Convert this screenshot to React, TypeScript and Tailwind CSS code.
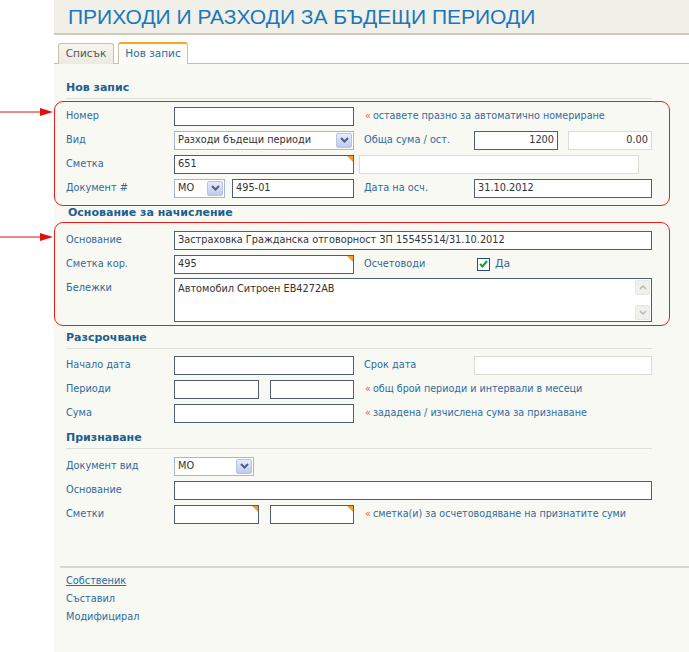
import React from "react";

const labelCls = "w-[108px] shrink-0 text-[#2f6a9b]";
const label2Cls = "w-[110px] shrink-0 text-[#2f6a9b]";

function Corner() {
  return (
    <span className="absolute right-0 top-0 h-0 w-0 border-l-[6px] border-t-[6px] border-l-transparent border-t-[#f0a030]" />
  );
}

function Field({
  w,
  value = "",
  right = false,
  disabled = false,
  corner = false,
}: {
  w: string;
  value?: string;
  right?: boolean;
  disabled?: boolean;
  corner?: boolean;
}) {
  return (
    <div
      className={`relative flex h-[19px] shrink-0 items-center bg-white px-[3px] text-[#333] ${w} ${
        disabled ? "border border-[#dcdcd3]" : "border border-[#4f5d72]"
      } ${right ? "justify-end" : ""}`}
    >
      <span className="leading-none">{value}</span>
      {corner && <Corner />}
    </div>
  );
}

function Select({ w, value }: { w: string; value: string }) {
  return (
    <div
      className={`flex h-[19px] shrink-0 items-center justify-between border border-[#a9b7cb] bg-white pl-[3px] pr-[1px] text-[#333] ${w}`}
    >
      <span className="leading-none">{value}</span>
      <span className="flex h-[15px] w-[16px] items-center justify-center rounded-[2px] border border-[#b6c4e2] bg-gradient-to-b from-[#e6ecf8] to-[#bccbeb]">
        <svg width="9" height="6" viewBox="0 0 9 6">
          <path d="M1 1 L4.5 4.5 L8 1" stroke="#4b5f88" strokeWidth="2" fill="none" />
        </svg>
      </span>
    </div>
  );
}

function Hint({ text }: { text: string }) {
  return (
    <span className="ml-[11px] text-[9.6px] text-[#2f6a9b]">
      <span className="mr-[2px] text-[#e45a5a]">«</span>
      {text}
    </span>
  );
}

function Row({ children }: { children: React.ReactNode }) {
  return <div className="flex h-[24px] items-center">{children}</div>;
}

function Heading({ text, className = "" }: { text: string; className?: string }) {
  return (
    <div className={`border-b border-[#deded6] pb-[3px] ${className}`}>
      <div className="h-[14px] text-[11px] font-bold leading-[14px] text-[#1d5f90]">{text}</div>
    </div>
  );
}

function Arrow({ top }: { top: string }) {
  return (
    <svg className={`absolute left-0 ${top}`} width="54" height="10" viewBox="0 0 54 10">
      <line x1="0" y1="5" x2="42" y2="5" stroke="#e01010" strokeWidth="1" />
      <polygon points="40,1 53,5 40,9" fill="#e01010" />
    </svg>
  );
}

export default function App() {
  return (
    <div className="relative h-[652px] w-[689px] overflow-hidden bg-white font-['DejaVu_Sans',sans-serif] text-[9.75px]">
      <Arrow top="top-[107px]" />
      <Arrow top="top-[232px]" />

      <div className="ml-[54px] flex h-[652px] flex-col">
        {/* header */}
        <div className="h-[35px] shrink-0 border-b-2 border-[#cfcbbb] bg-[#f1f0e8] pl-[14px] pt-[5px]">
          <div className="font-['Liberation_Sans',sans-serif] text-[21px] leading-[24px] text-[#1b77bd]">
            ПРИХОДИ И РАЗХОДИ ЗА БЪДЕЩИ ПЕРИОДИ
          </div>
        </div>

        {/* tabs */}
        <div className="flex h-[29px] shrink-0 items-end border-b border-[#c9c2a2] bg-white pl-[4px] text-[10.5px]">
          <div className="mb-[-1px] flex h-[21px] w-[56px] items-center justify-center rounded-t-[3px] border border-b-0 border-[#c9c2a2] bg-gradient-to-b from-[#f6f5ee] to-[#ecebe2] text-[#555]">
            Списък
          </div>
          <div className="mb-[-1px] ml-[4px] flex h-[22px] w-[70px] items-center justify-center rounded-t-[3px] border border-b-0 border-[#c9c2a2] border-t-2 border-t-[#f3a826] bg-[#fbfbf8] text-[#2f6a9b]">
            Нов запис
          </div>
        </div>

        {/* form */}
        <div className="flex-1 bg-[#f9f9f4]">
          <div className="ml-[12px] w-[586px]">
            <Heading text="Нов запис" className="mt-[17px]" />

            <div className="ml-[-12px] mt-[2px] w-[616px] rounded-[9px] border border-[#ee1c1c] pb-[5px] pl-[11px] pr-[17px] pt-[2px]">
              <Row>
                <span className={labelCls}>Номер</span>
                <Field w="w-[180px]" />
                <Hint text="оставете празно за автоматично номериране" />
              </Row>
              <Row>
                <span className={labelCls}>Вид</span>
                <Select w="w-[180px]" value="Разходи бъдещи периоди" />
                <span className={`ml-[10px] ${label2Cls}`}>Обща сума / ост.</span>
                <Field w="w-[84px]" value="1200" right />
                <div className="ml-[10px]">
                  <Field w="w-[84px]" value="0.00" right disabled />
                </div>
              </Row>
              <Row>
                <span className={labelCls}>Сметка</span>
                <Field w="w-[180px]" value="651" corner />
                <div className="ml-[5px]">
                  <Field w="w-[280px]" disabled />
                </div>
              </Row>
              <Row>
                <span className={labelCls}>Документ #</span>
                <Select w="w-[51px]" value="МО" />
                <div className="ml-[7px]">
                  <Field w="w-[122px]" value="495-01" />
                </div>
                <span className={`ml-[10px] ${label2Cls}`}>Дата на осч.</span>
                <Field w="w-[178px]" value="31.10.2012" />
              </Row>
            </div>

            <div className="ml-[2px] h-[14px] text-[11px] font-bold leading-[14px] text-[#1d5f90]">
              Основание за начисление
            </div>

            <div className="ml-[-12px] mt-[2px] w-[616px] rounded-[9px] border border-[#ee1c1c] pb-[3px] pl-[11px] pr-[17px] pt-[5px]">
              <Row>
                <span className={labelCls}>Основание</span>
                <Field w="w-[478px]" value="Застраховка Гражданска отговорност ЗП 15545514/31.10.2012" />
              </Row>
              <Row>
                <span className={labelCls}>Сметка кор.</span>
                <Field w="w-[180px]" value="495" corner />
                <span className={`ml-[10px] ${label2Cls}`}>Осчетоводи</span>
                <span className="ml-[3px] flex h-[13px] w-[13px] items-center justify-center border border-[#1f4f7c] bg-white">
                  <svg width="9" height="8" viewBox="0 0 9 8">
                    <path d="M1 4 L3.5 6.5 L8 1" stroke="#1f9a2e" strokeWidth="2" fill="none" />
                  </svg>
                </span>
                <span className="ml-[5px] text-[11px] text-[#2f6a9b]">Да</span>
              </Row>
              <div className="mt-[2px] flex h-[44px]">
                <span className={`${labelCls} pt-[3px]`}>Бележки</span>
                <div className="flex h-[44px] w-[478px] border border-[#4f5d72] bg-white">
                  <div className="flex-1 px-[3px] pt-[3px] text-[#333]">Автомобил Ситроен ЕВ4272АВ</div>
                  <div className="flex w-[16px] flex-col justify-between py-[1px] pr-[1px]">
                    <span className="flex h-[15px] items-center justify-center rounded-[2px] border border-[#e6e6df] bg-[#f1f1ec]">
                      <svg width="8" height="5" viewBox="0 0 8 5">
                        <path d="M1 4 L4 1 L7 4" stroke="#b9b9b2" strokeWidth="1.5" fill="none" />
                      </svg>
                    </span>
                    <span className="flex h-[15px] items-center justify-center rounded-[2px] border border-[#e6e6df] bg-[#f1f1ec]">
                      <svg width="8" height="5" viewBox="0 0 8 5">
                        <path d="M1 1 L4 4 L7 1" stroke="#b9b9b2" strokeWidth="1.5" fill="none" />
                      </svg>
                    </span>
                  </div>
                </div>
              </div>
            </div>

            <Heading text="Разсрочване" className="mt-[5px]" />
            <div className="mt-[4px]">
              <Row>
                <span className={labelCls}>Начало дата</span>
                <Field w="w-[180px]" />
                <span className={`ml-[10px] ${label2Cls}`}>Срок дата</span>
                <Field w="w-[178px]" disabled />
              </Row>
              <Row>
                <span className={labelCls}>Периоди</span>
                <Field w="w-[85px]" />
                <div className="ml-[11px]">
                  <Field w="w-[84px]" />
                </div>
                <Hint text="общ брой периоди и интервали в месеци" />
              </Row>
              <Row>
                <span className={labelCls}>Сума</span>
                <Field w="w-[180px]" />
                <Hint text="зададена / изчислена сума за признаване" />
              </Row>
            </div>

            <Heading text="Признаване" className="mt-[6px]" />
            <div className="mt-[5px]">
              <Row>
                <span className={labelCls}>Документ вид</span>
                <Select w="w-[80px]" value="МО" />
              </Row>
              <Row>
                <span className={labelCls}>Основание</span>
                <Field w="w-[478px]" />
              </Row>
              <Row>
                <span className={labelCls}>Сметки</span>
                <Field w="w-[85px]" corner />
                <div className="ml-[11px]">
                  <Field w="w-[84px]" corner />
                </div>
                <Hint text="сметка(и) за осчетоводяване на признатите суми" />
              </Row>
            </div>
          </div>

          <div className="ml-[6px] mt-[40px] border-t-2 border-[#d6d6d0]" />
          <div className="ml-[12px] mt-[4px] flex flex-col">
            <span className="h-[18px] leading-[18px] text-[#2a6aa0] underline">Собственик</span>
            <span className="h-[18px] leading-[18px] text-[#2f6a9b]">Съставил</span>
            <span className="h-[18px] leading-[18px] text-[#2f6a9b]">Модифицирал</span>
          </div>
        </div>
      </div>
    </div>
  );
}
